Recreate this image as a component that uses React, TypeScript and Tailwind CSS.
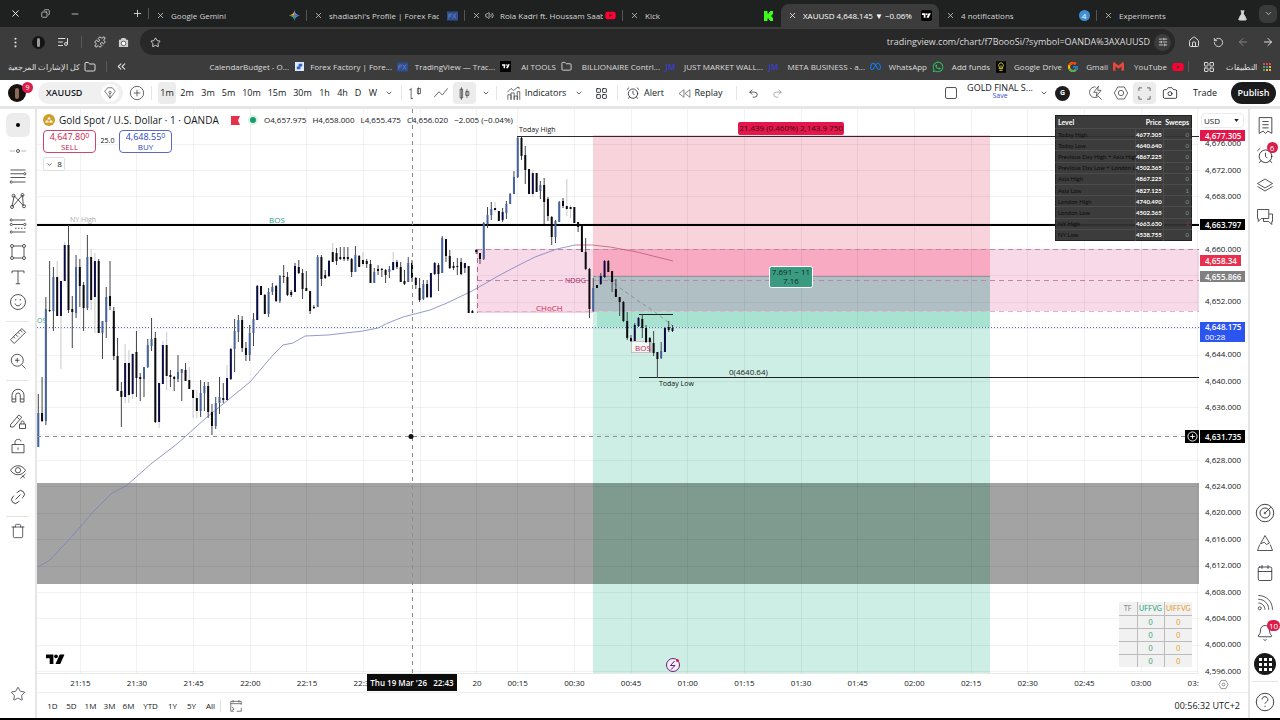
import type { ReactNode } from "react";
import {
  AlarmClock,
  Bell,
  Calendar,
  Camera,
  ChevronDown,
  ChevronsLeft,
  Copy,
  EllipsisVertical,
  FlaskConical,
  Folder,
  House,
  Layers,
  LayoutGrid,
  Link2,
  ListMusic,
  Minus,
  Plus,
  Puzzle,
  Redo2,
  RotateCcw,
  Rss,
  SlidersHorizontal,
  Star,
  Trash,
  Undo2,
  Volume2,
  X,
  ArrowLeft,
  ArrowRight,
} from "lucide-react";
import { FaWhatsapp, FaYoutube, FaMeta } from "react-icons/fa6";
import { FcGoogle } from "react-icons/fc";
import { SiGmail } from "react-icons/si";

type Kind = "k" | "n" | "b";
// high, low, body top, body bottom, colour, pale wick
type Candle = [number, number, number, number, Kind, 1?];

const candles: Candle[] = [
  [394, 447, 413, 447, "b"], [377, 422, 413, 421, "k"], [297, 425, 309, 421, "b"], [261, 312, 310, 311, "k"],
  [267, 331, 277, 311, "b"], [261, 316, 277, 316, "k", 1], [281, 369, 281, 316, "n", 1], [242, 281, 245, 281, "n", 1],
  [225, 313, 245, 310, "k"], [296, 348, 309, 312, "k"], [255, 318, 267, 313, "b"], [259, 307, 267, 286, "k"],
  [282, 331, 285, 308, "k"], [235, 310, 257, 308, "b"], [249, 310, 257, 300, "k", 1], [253, 333, 261, 297, "n", 1],
  [259, 333, 261, 333, "k"], [321, 359, 321, 333, "b"], [287, 338, 297, 322, "b"], [261, 310, 296, 306, "k"],
  [307, 360, 311, 356, "k"], [338, 391, 356, 391, "k"], [382, 427, 391, 397, "k"], [344, 403, 363, 397, "n", 1],
  [350, 403, 363, 395, "k", 1], [353, 399, 354, 394, "n", 1], [331, 397, 352, 378, "k"], [373, 401, 377, 379, "k"],
  [367, 397, 367, 379, "b"], [339, 368, 345, 367, "b"], [318, 351, 339, 346, "b"], [332, 423, 338, 422, "k"],
  [383, 428, 383, 422, "n", 1], [341, 384, 345, 384, "n", 1], [332, 390, 345, 376, "k", 1], [370, 387, 375, 377, "k"],
  [376, 391, 377, 379, "k"], [355, 382, 372, 379, "b"], [369, 401, 369, 373, "b"], [363, 381, 370, 381, "k"],
  [367, 389, 380, 389, "k", 1], [389, 418, 390, 398, "k", 1], [390, 418, 398, 411, "k", 1], [380, 417, 393, 411, "b"],
  [382, 411, 386, 393, "b"], [382, 418, 386, 412, "k"], [404, 435, 412, 426, "k"], [397, 429, 403, 426, "b"],
  [377, 414, 397, 403, "b"], [383, 403, 398, 400, "k"], [365, 400, 378, 400, "n", 1], [348, 380, 349, 379, "n"],
  [319, 372, 331, 349, "b"], [315, 342, 320, 332, "b"], [316, 352, 320, 348, "k"], [342, 361, 348, 355, "k"],
  [325, 361, 333, 355, "b"], [313, 346, 319, 333, "b"], [285, 320, 286, 320, "n"], [286, 295, 286, 295, "k"],
  [294, 314, 295, 314, "k"], [288, 317, 292, 314, "b"], [283, 295, 287, 292, "b"], [285, 302, 286, 301, "k"],
  [275, 303, 276, 301, "b"], [265, 283, 276, 277, "k"], [272, 296, 277, 295, "k"], [290, 297, 292, 295, "k"],
  [263, 292, 266, 292, "n"], [260, 274, 267, 273, "k"], [269, 299, 273, 289, "k"], [271, 291, 288, 291, "k"],
  [291, 314, 291, 311, "k"], [305, 309, 307, 308, "k"], [255, 307, 257, 307, "b"], [255, 286, 257, 279, "k"],
  [270, 279, 275, 278, "k"], [260, 277, 261, 276, "n"], [243, 262, 252, 262, "k", 1], [248, 265, 253, 261, "k"],
  [247, 260, 257, 259, "k"], [247, 261, 257, 259, "k"], [247, 261, 257, 259, "k"], [258, 277, 259, 272, "k"],
  [246, 272, 255, 272, "b"], [255, 267, 256, 267, "k"], [252, 266, 260, 264, "k", 1], [259, 268, 261, 264, "k"],
  [260, 283, 264, 283, "k"], [268, 283, 272, 283, "b"], [265, 275, 269, 271, "k"], [268, 277, 269, 270, "k"],
  [269, 283, 270, 275, "k"], [266, 278, 269, 272, "b"], [252, 271, 262, 270, "n", 1], [260, 269, 262, 267, "k"],
  [262, 282, 267, 282, "k"], [270, 285, 281, 284, "k"], [257, 282, 263, 282, "b"], [260, 282, 263, 278, "k"],
  [277, 289, 278, 285, "k"], [278, 302, 288, 300, "k"], [280, 300, 284, 299, "b"], [280, 298, 284, 297, "k"],
  [273, 298, 273, 297, "n"], [262, 275, 263, 274, "n"], [263, 291, 265, 274, "k"], [236, 273, 238, 273, "b"],
  [239, 262, 239, 256, "k"], [250, 269, 256, 268, "k"], [262, 270, 266, 268, "k"], [258, 275, 266, 267, "k"],
  [258, 275, 262, 274, "k"], [263, 273, 263, 268, "n"], [266, 313, 266, 313, "k"], [310, 313, 311, 313, "k"],
  [249, 254, 250, 252, "k"], [253, 264, 253, 259, "k"], [222, 260, 223, 259, "b"], [207, 228, 215, 224, "b"],
  [202, 220, 209, 215, "b"], [202, 212, 208, 210, "k", 1], [211, 221, 211, 221, "k"], [208, 222, 212, 220, "n"],
  [201, 219, 204, 213, "b"], [193, 204, 194, 204, "b"], [171, 194, 177, 194, "b"], [137, 178, 138, 177, "b"],
  [137, 160, 138, 156, "k"], [146, 184, 155, 170, "k"], [169, 194, 169, 194, "k"], [170, 197, 173, 194, "n", 1],
  [173, 192, 173, 192, "k"], [181, 199, 185, 191, "b"], [178, 224, 185, 202, "k"], [197, 221, 199, 216, "k"],
  [216, 245, 217, 237, "k"], [220, 243, 221, 237, "b"], [201, 222, 202, 222, "b"], [198, 208, 201, 206, "k"],
  [179, 216, 206, 209, "k", 1], [205, 218, 207, 209, "k", 1], [207, 223, 207, 223, "k"], [222, 232, 222, 227, "k"],
  [226, 252, 226, 252, "k"], [238, 270, 252, 269, "k"], [268, 318, 269, 309, "k"], [278, 312, 288, 311, "b"],
  [274, 288, 285, 288, "k", 1], [273, 285, 276, 284, "n"], [260, 278, 261, 277, "n"], [260, 272, 261, 272, "k"],
  [271, 292, 271, 282, "k"], [279, 297, 289, 297, "k"], [297, 316, 297, 302, "k"], [301, 322, 302, 321, "k"],
  [312, 340, 321, 338, "k"], [335, 342, 338, 341, "k"], [323, 341, 325, 341, "n"], [317, 327, 318, 326, "n"],
  [314, 338, 319, 328, "k"], [325, 343, 328, 342, "k"], [337, 352, 338, 342, "k"], [331, 356, 343, 353, "k"],
  [352, 378, 352, 359, "k"], [342, 359, 351, 358, "b"], [327, 352, 328, 352, "n"], [321, 332, 327, 330, "k"],
  [325, 332, 328, 331, "n"],
];

const bodyColor = { k: "#0a0a0f", n: "#0b0b45", b: "#45639f" };

const gridX = [80, 136, 193, 250, 306, 363, 420, 476, 517, 574, 631, 687, 744, 801, 857, 914, 971, 1027, 1084, 1141, 1197];
const gridY = Array.from({ length: 21 }, (_, i) => Math.round(143.5 + i * 26.38));

const hiddenPrices = [4664, 4656, 4648, 4632];
const prices = Array.from({ length: 21 }, (_, i) => 4676 - i * 4);

const levels: [string, string, string][] = [
  ["Today High", "4677.305", "0"],
  ["Today Low", "4640.640", "0"],
  ["Previous Day High + Asia High", "4867.225", "0"],
  ["Previous Day Low + London Low", "4502.365", "0"],
  ["Asia High", "4867.225", "0"],
  ["Asia Low", "4827.125", "1"],
  ["London High", "4740.490", "0"],
  ["London Low", "4502.365", "0"],
  ["NY High", "4663.630", "1"],
  ["NY Low", "4538.755", "0"],
];

function TvMark({ className }: { className?: string }) {
  return (
    <svg viewBox="0 0 36 20" className={className} fill="currentColor" aria-hidden="true">
      <path d="M0 1h14v18H7V8H0z" />
      <circle cx="19" cy="4.500" r="3.500" />
      <path d="M26 1h9l-8 18h-9z" />
    </svg>
  );
}

function Cell({ w, label, on, children }: { w: string; label?: string; on?: boolean; children: ReactNode }) {
  return (
    <button
      aria-label={label}
      className={`${w} ${on ? "bg-[#ececec]" : ""} h-[22px] shrink-0 rounded-sm flex items-center justify-center whitespace-nowrap`}
    >
      {children}
    </button>
  );
}

function Rule({ className }: { className: string }) {
  return <span className={`shrink-0 ${className}`} />;
}

/* Thin-line drawing used by the toolbar and both side rails */
function Glyph({ children, size = "size-[20px]" }: { children: ReactNode; size?: string }) {
  return (
    <svg viewBox="0 0 24 24" className={size} fill="none" stroke="#333" strokeWidth="1.100" aria-hidden="true">
      {children}
    </svg>
  );
}

function Tab({ title, icon, active, audio, divider }: { title: string; icon: ReactNode; active?: boolean; audio?: boolean; divider?: boolean }) {
  return (
    <div
      className={`relative flex-1 min-w-0 h-[23px] mt-1 px-1.5 flex items-center ${
        active ? "bg-[#3c3c3c] rounded-t-lg text-white" : ""
      }`}
    >
      <button aria-label={`Close ${title}`} className="shrink-0 w-[10px] flex justify-center">
        <X className="size-[9px]" />
      </button>
      {audio && <Volume2 className="size-[9px] ml-1 shrink-0" />}
      <a href="#" className="ml-1.5 w-[110px] overflow-hidden whitespace-nowrap">
        {title}
      </a>
      <span className="ml-auto shrink-0 w-[14px] flex justify-center">{icon}</span>
      {divider && <span className="absolute right-0 top-1.5 w-px h-[11px] bg-[#555]" />}
    </div>
  );
}

function TabStrip() {
  return (
    <div className="h-[27px] bg-[#1f2020] flex items-center text-[8px] text-[#d5d5d5]">
      <div className="w-[149px] shrink-0 flex items-center pl-2">
        <button aria-label="Close window" className="w-[14px] flex justify-center"><X className="size-[11px] text-white" /></button>
        <button aria-label="Restore" className="w-[14px] ml-4 flex justify-center"><Copy className="size-[9px] -scale-x-100" /></button>
        <button aria-label="Minimize" className="w-[14px] ml-4 flex justify-center"><Minus className="size-[10px]" /></button>
        <button aria-label="New tab" className="w-[14px] ml-auto mr-1 flex justify-center"><Plus className="size-[11px]" /></button>
        <span className="w-px h-[11px] bg-[#555]" />
      </div>
      <Tab
        title="Google Gemini"
        divider
        icon={
          <svg viewBox="0 0 20 20" className="size-[11px]">
            <path d="M10 0c1 6 4 9 10 10H10z" fill="#4a8df6" />
            <path d="M20 10c-6 1-9 4-10 10V10z" fill="#5b7ff0" />
            <path d="M10 20C9 14 6 11 0 10h10z" fill="#36b25f" />
            <path d="M0 10c6-1 9-4 10-10v10z" fill="#f0a94a" />
          </svg>
        }
      />
      <Tab title="shadiashi's Profile | Forex Facto" divider icon={<ForexIcon />} />
      <Tab title="Rola Kadri ft. Houssam Saab" audio divider icon={<FaYoutube className="size-[11px] text-[#ff0033]" />} />
      <Tab
        title="Kick"
        icon={
          <svg viewBox="0 0 18 20" className="w-[9px] h-[10px]" fill="#3dfb1b">
            <path d="M0 0h7v5h3V2h2V0h6v7h-2v2h-2v2h2v2h2v7h-6v-2h-2v-3H7v5H0z" />
          </svg>
        }
      />
      <Tab
        title="XAUUSD 4,648.145 ▼ −0.06%"
        active
        icon={<span className="size-[11px] bg-black rounded-xs flex items-center justify-center"><TvMark className="w-[9px] text-white" /></span>}
      />
      <Tab
        title="4 notifications"
        divider
        icon={<span className="size-[11px] rounded-full bg-[#3f8fd6] text-white text-[8px] flex items-center justify-center">4</span>}
      />
      <Tab title="Experiments" icon={<FlaskConical className="size-[11px] fill-current" />} />
      <div className="w-[25px] shrink-0 flex items-center">
        <button aria-label="Search tabs" className="ml-1 size-[18px] rounded-md bg-[#3a3a3a] flex items-center justify-center">
          <ChevronDown className="size-[9px]" />
        </button>
      </div>
    </div>
  );
}

function ForexIcon() {
  return (
    <svg viewBox="0 0 12 10" className="w-[11px] h-[10px]">
      <rect width="12" height="10" fill="#2f4c8c" />
      <path d="M2 8V3h4M2 5h3M6 8l4-6M7 3l3 5" stroke="#5d7cc0" fill="none" />
    </svg>
  );
}

function AddressBar() {
  return (
    <div className="h-[30px] bg-[#3c3c3c] flex items-center text-[#dcdcdc]">
      <div className="w-[140px] shrink-0 flex items-center pl-2">
        <button aria-label="Menu" className="w-[14px] flex justify-center"><EllipsisVertical className="size-[13px]" /></button>
        <span className="ml-2.5 size-[13px] rounded-full bg-[#151515] flex items-center justify-center">
          <span className="w-[3px] h-[9px] rounded-full bg-[#999]" />
        </span>
        <button aria-label="Media" className="ml-3 w-[12px]"><ListMusic className="size-[12px]" /></button>
        <span className="ml-3 w-px h-[12px] bg-[#5a5a5a]" />
        <button aria-label="Extensions" className="ml-3 w-[12px]"><Puzzle className="size-[12px]" /></button>
        <button aria-label="Capture" className="ml-3 w-[12px]">
          <svg viewBox="0 0 12 12" className="size-[11px]">
            <path d="M1 3h2l1-2h4l1 2h2v8H1z" fill="#cfcfcf" />
            <circle cx="6" cy="7" r="2.500" fill="#fff" stroke="#555" />
          </svg>
        </button>
      </div>
      <div className="flex-1 h-[26px] rounded-full bg-[#282828] flex items-center pl-2.5 pr-1">
        <button aria-label="Bookmark"><Star className="size-[11px]" /></button>
        <input
          aria-label="Address"
          readOnly
          value="tradingview.com/chart/f7BoooSi/?symbol=OANDA%3AXAUUSD"
          className="flex-1 min-w-0 bg-transparent text-right text-[9px] outline-none mr-1"
        />
        <button aria-label="Site settings" className="size-[17px] rounded-full bg-[#3c3c3c] flex items-center justify-center">
          <SlidersHorizontal className="size-[10px]" />
        </button>
      </div>
      <div className="w-[105px] shrink-0 flex items-center justify-around pl-1.5">
        <button aria-label="Home"><House className="size-[12px]" /></button>
        <button aria-label="Reload"><RotateCcw className="size-[11px]" /></button>
        <button aria-label="Forward" disabled><ArrowLeft className="size-[12px] text-[#858585]" /></button>
        <button aria-label="Back"><ArrowRight className="size-[12px]" /></button>
      </div>
    </div>
  );
}

const jm = <span className="text-[8px] font-semibold text-[#3b3fd8]">JM</span>;

const bookmarks: { text: string; w: string; icon: ReactNode }[] = [
  {
    text: "CalendarBudget - O...",
    w: "w-[96px]",
    icon: (
      <svg viewBox="0 0 10 10" className="size-[9px]">
        <rect width="10" height="10" fill="#dfe8fb" />
        <path d="M2 8V5h2V2h4v3H6v3z" fill="#2f62c9" />
      </svg>
    ),
  },
  { text: "Forex Factory | Fore...", w: "w-[103px]", icon: <ForexIcon /> },
  {
    text: "TradingView — Trac...",
    w: "w-[103px]",
    icon: <span className="size-[11px] bg-black flex items-center justify-center"><TvMark className="w-[8px] text-white" /></span>,
  },
  { text: "AI TOOLS", w: "w-[61px]", icon: <Folder className="size-[11px]" /> },
  { text: "BILLIONAIRE Contrl...", w: "w-[104px]", icon: jm },
  { text: "JUST MARKET WALL...", w: "w-[103px]", icon: jm },
  { text: "META BUSINESS - a...", w: "w-[102px]", icon: <FaMeta className="size-[11px] text-[#1478e8]" /> },
  { text: "WhatsApp", w: "w-[62px]", icon: <FaWhatsapp className="size-[12px] text-[#2bc464]" /> },
  {
    text: "Add funds",
    w: "w-[63px]",
    icon: (
      <svg viewBox="0 0 12 14" className="w-[10px] h-[12px]">
        <rect width="12" height="14" fill="#080808" />
        <path d="M6 2a3 3 0 0 1 2 5v2H4V7a3 3 0 0 1 2-5zM4 11h4M6 5v4" fill="none" stroke="#f0dc30" />
      </svg>
    ),
  },
  { text: "Google Drive", w: "w-[72px]", icon: <FcGoogle className="size-[12px]" /> },
  { text: "Gmail", w: "w-[46px]", icon: <SiGmail className="size-[11px] text-[#e6483c]" /> },
  { text: "YouTube", w: "w-[59px]", icon: <FaYoutube className="size-[12px] text-[#ff0033]" /> },
];

function BookmarkBar() {
  return (
    <div className="h-[23px] bg-[#3c3c3c] flex items-center pb-1 text-[8px] text-[#dcdcdc] whitespace-nowrap">
      <a href="#" dir="rtl" className="w-[82px] shrink-0 text-right pr-0.5">كل الإشارات المرجعية</a>
      <Folder className="ml-0.5 size-[12px] shrink-0" />
      <Rule className="ml-2.5 w-px h-[11px] bg-[#5a5a5a]" />
      <button aria-label="More bookmarks" className="ml-2"><ChevronsLeft className="size-[13px]" /></button>
      <div className="ml-auto flex items-center">
        {bookmarks.map((b) => (
          <a key={b.text} href="#" className={`${b.w} shrink-0 flex items-center justify-end`}>
            <span className="mr-1">{b.text}</span>
            <span className="w-[13px] shrink-0 flex justify-center">{b.icon}</span>
          </a>
        ))}
      </div>
      <Rule className="ml-1 w-px h-[11px] bg-[#5a5a5a]" />
      <LayoutGrid className="ml-3.5 size-[12px] shrink-0" />
      <a href="#" className="w-[56px] shrink-0 flex items-center justify-end">
        <span className="mr-1.5">التطبيقات</span>
        <span className="grid grid-cols-3 gap-px">
          {["#e0483d", "#e0483d", "#e0483d", "#3fa85b", "#4b84e6", "#eab840", "#3fa85b", "#eab840", "#eab840"].map((c, i) => (
            <i key={i} className="size-[2px]" style={{ background: c }} />
          ))}
        </span>
      </a>
      <Rule className="w-[9px]" />
    </div>
  );
}

function ChartToolbar() {
  return (
    <div className="h-[26px] bg-white flex items-center text-[9px] text-[#131722] whitespace-nowrap overflow-hidden">
      <button aria-label="Account" className="relative ml-2 size-[18px] shrink-0 rounded-full bg-[#15110f] flex items-center justify-center">
        <span className="w-[4px] h-[11px] rounded-full bg-[#8d6a58]" />
        <span className="absolute -top-[2px] left-[14px] size-[11px] rounded-full bg-[#d91e4a] text-white text-[7px] leading-none flex items-center justify-center">
          9
        </span>
      </button>
      <button className="ml-3 w-[85px] h-[22px] shrink-0 rounded-full bg-[#f0f0f0] pl-2 pr-1 flex items-center justify-between font-semibold">
        XAUUSD
        <span className="size-[18px] rounded-full bg-white flex items-center justify-center">
          <Glyph size="size-[14px]">
            <path d="M12 21 3 9l5-6h8l5 6zM12 21v-8" />
            <circle cx="12" cy="11" r="2" />
          </Glyph>
        </span>
      </button>
      <Cell w="w-[28px]" label="Compare">
        <Glyph size="size-[16px]">
          <circle cx="12" cy="12" r="10" />
          <path d="M12 7v10M7 12h10" />
        </Glyph>
      </Cell>
      <Rule className="w-px h-[14px] bg-[#e5e5e5] mr-1.5" />
      <Cell w="w-[18px]" on>1m</Cell>
      <Cell w="w-[22px]">2m</Cell>
      <Cell w="w-[20px]">3m</Cell>
      <Cell w="w-[21px]">5m</Cell>
      <Cell w="w-[25px]">10m</Cell>
      <Cell w="w-[26px]">15m</Cell>
      <Cell w="w-[25px]">30m</Cell>
      <Cell w="w-[19px]">1h</Cell>
      <Cell w="w-[17px]">4h</Cell>
      <Cell w="w-[14px]">D</Cell>
      <Cell w="w-[16px]">W</Cell>
      <Cell w="w-[16px]" label="Intervals"><ChevronDown className="size-[8px]" /></Cell>
      <Rule className="w-px h-[14px] bg-[#e5e5e5] ml-1" />
      <Cell w="w-[26px]" label="Bars">
        <Glyph size="size-[15px]"><path d="M5 3v18M2 6h3M5 20h3M17 2v12M15 4h5v8h-5z" /></Glyph>
      </Cell>
      <Cell w="w-[25px]" label="Line"><Glyph size="size-[16px]"><path d="m2 18 7-8 5 5 8-10" /></Glyph></Cell>
      <Cell w="w-[23px]" label="Candles" on>
        <Glyph size="size-[15px]"><path d="M7 2v20M5 5h4v14H5zM16 5v14M14 9h5v6h-5z" /></Glyph>
      </Cell>
      <Cell w="w-[20px]" label="Chart types"><ChevronDown className="size-[8px]" /></Cell>
      <Rule className="w-px h-[14px] bg-[#e5e5e5] mr-2" />
      <Cell w="w-[62px]">
        <Glyph size="size-[15px]">
          <path d="m2 10 6-6 4 3 7-5M18 2h3v3M3 22v-8h5v8M8 22V11h5v11M13 22v-6h5v6M18 22V9h4v13" />
        </Glyph>
        <span className="ml-1">Indicators</span>
      </Cell>
      <Cell w="w-[24px]" label="Favourite indicators"><ChevronDown className="size-[8px]" /></Cell>
      <Cell w="w-[20px]" label="Templates"><LayoutGrid strokeWidth={1.5} className="size-[13px]" /></Cell>
      <Rule className="w-px h-[14px] bg-[#e5e5e5] ml-1.5 mr-1" />
      <Cell w="w-[46px]"><AlarmClock strokeWidth={1.3} className="size-[14px] mr-1" />Alert</Cell>
      <Cell w="w-[64px]">
        <Glyph size="size-[13px]"><path d="M11 5v14l-9-7zM22 5v14l-9-7z" /></Glyph>
        <span className="ml-1">Replay</span>
      </Cell>
      <Rule className="w-px h-[14px] bg-[#e5e5e5] mx-1" />
      <Cell w="w-[24px]" label="Undo"><Undo2 strokeWidth={1.5} className="size-[11px]" /></Cell>
      <Cell w="w-[24px]" label="Redo"><Redo2 strokeWidth={1.5} className="size-[11px] text-[#8a8a8a]" /></Cell>
      <div className="ml-auto flex items-center">
        <Cell w="w-[16px]" label="Layout"><span className="size-[12px] border border-[#555] rounded-xs" /></Cell>
        <button className="w-[70px] h-[24px] ml-1.5 flex flex-col items-center pt-0.5 leading-[9px]">
          <span>GOLD FINAL S...</span>
          <span className="text-[7px] leading-[8px] text-[#3b49c9]">Save</span>
        </button>
        <Cell w="w-[18px]" label="Layouts"><ChevronDown className="size-[8px]" /></Cell>
        <span className="size-[15px] ml-0.5 rounded-full bg-[#1d1d1d] text-white text-[7px] font-bold flex items-center justify-center">G</span>
        <Rule className="w-3" />
        <Cell w="w-[26px]" label="Quick search">
          <Glyph size="size-[16px]"><path d="M17 17a8 8 0 1 1-4-14M16 16l6 6M17 2l-7 9h5l-1 6 7-9h-5z" /></Glyph>
        </Cell>
        <Cell w="w-[25px]" label="Settings">
          <Glyph size="size-[16px]"><path d="M7 3h10l5 9-5 9H7l-5-9z" /><circle cx="12" cy="12" r="4" /></Glyph>
        </Cell>
        <Cell w="w-[23px]" label="Fullscreen" on>
          <Glyph size="size-[15px]"><path d="M3 8V3h5M16 3h5v5M21 16v5h-5M8 21H3v-5" /></Glyph>
        </Cell>
        <Cell w="w-[27px]" label="Snapshot"><Camera strokeWidth={1.2} className="size-[16px]" /></Cell>
        <button className="w-[40px] ml-0.5 h-[22px] rounded-full">Trade</button>
        <button className="w-[45px] h-[22px] ml-1.5 mr-1 rounded-full bg-[#1b1b1b] text-white font-semibold">Publish</button>
      </div>
    </div>
  );
}

const leftTools: { name: string; h: string; glyph: ReactNode; ruled?: boolean }[] = [
  { name: "Cross line", h: "h-[25px]", glyph: <><path d="M1 12h7M16 12h7" stroke="#aaa" /><circle cx="12" cy="12" r="2" /></> },
  { name: "Fib", h: "h-[25px]", glyph: <><path d="M2 4h20M2 9h17M2 14h20M5 20h17" /><circle cx="21" cy="9" r="1.500" /><circle cx="3" cy="20" r="1.500" /></> },
  { name: "Patterns", h: "h-[25px]", glyph: <><path d="M4 19 7 5l12 13L18 4 5 19" /><circle cx="4" cy="20" r="2" /><circle cx="6" cy="5" r="2" /><circle cx="18" cy="4" r="2" /><circle cx="20" cy="19" r="2" /></> },
  { name: "Forecast", h: "h-[25px]", glyph: <><path d="M5 4h17M5 10h14M5 20h17" /><path d="M8 15h14" strokeDasharray="2 2" /><circle cx="3" cy="4" r="1.500" /><circle cx="21" cy="10" r="1.500" /><circle cx="3" cy="10" r="1.500" /><circle cx="3" cy="20" r="1.500" /></> },
  { name: "Shapes", h: "h-[26px]", glyph: <><path d="M6 4h12M6 20h12M4 6v12M20 6v12" /><circle cx="4" cy="4" r="2" /><circle cx="20" cy="4" r="2" /><circle cx="4" cy="20" r="2" /><circle cx="20" cy="20" r="2" /></> },
  { name: "Text", h: "h-[25px]", glyph: <path d="M4 7V4h16v3M12 4v17M9 21h6" /> },
  { name: "Icons", h: "h-[25px]", glyph: <><circle cx="12" cy="12" r="10" /><path d="M8 14c1 4 7 4 8 0M9 8v2M15 8v2" /></> },
  { name: "Measure", h: "h-[25px]", glyph: <path d="M2 17 17 2l5 5L7 22zM6 13l2 2M9 10l3 3M12 7l2 2M15 4l3 3" />, ruled: true },
  { name: "Zoom", h: "h-[25px]", glyph: <><circle cx="11" cy="11" r="8" /><path d="m17 17 5 5M11 8v6M8 11h6" /></> },
  { name: "Magnet", h: "h-[26px]", glyph: <path d="M4 20V11a8 8 0 0 1 16 0v9h-5v-9a3 3 0 0 0-6 0v9zM4 16h5M15 16h5" />, ruled: true },
  { name: "Draw mode", h: "h-[25px]", glyph: <><path d="M2 17 13 4l4 3L6 20H2zM11 7l3 3" /><path d="M14 16h8v6h-8zM16 16v-2c0-3 4-3 4 0v2" /></> },
  { name: "Lock", h: "h-[25px]", glyph: <><path d="M4 10h16v11H4zM8 10V7c0-5 8-5 8-1M12 14v3" /></> },
  { name: "Hide", h: "h-[25px]", glyph: <><path d="M2 11c5-8 15-8 20 0-5 8-15 8-20 0z" /><circle cx="12" cy="11" r="3.500" /><path d="m15 22 7-6M17 18l4 3" /></> },
];

function LeftRail() {
  return (
    <nav className="w-[35px] shrink-0 bg-white flex flex-col items-center pt-1">
      <button aria-label="Cursor" className="size-[24px] shrink-0 rounded-md bg-[#ececec] flex items-center justify-center">
        <span className="size-[4px] rounded-full bg-black" />
      </button>
      {leftTools.map((t) => (
        <div key={t.name} className="shrink-0 flex flex-col items-center">
          {t.ruled && <span className="w-[23px] h-px mt-2 bg-[#e6e6e6]" />}
          <button aria-label={t.name} className={`${t.h} w-[24px] flex items-end justify-center pb-0.5`}>
            <Glyph size="size-[18px]">{t.glyph}</Glyph>
          </button>
        </div>
      ))}
      <button aria-label="Sync" className="h-[26px] flex items-end pb-0.5"><Link2 strokeWidth={1} className="size-[18px] -rotate-45" /></button>
      <span className="w-[23px] h-px mt-2 bg-[#e2e2e2]" />
      <button aria-label="Remove" className="h-[24px] flex items-end pb-0.5"><Trash strokeWidth={1} className="size-[16px]" /></button>
      <button aria-label="Favourites" className="mt-auto mb-4"><Star strokeWidth={1} className="size-[16px]" /></button>
    </nav>
  );
}

function Badge({ children }: { children: ReactNode }) {
  return (
    <span className="absolute -top-[3px] left-[11px] min-w-[11px] h-[11px] px-0.5 rounded-full bg-[#d91e4a] text-white text-[8px] leading-none flex items-center justify-center">
      {children}
    </span>
  );
}

function RightRail() {
  return (
    <nav className="w-[30px] shrink-0 bg-white flex flex-col items-center pt-1.5">
      <button aria-label="Watchlist" className="h-[20px]">
        <Glyph size="size-[19px]"><path d="M4 2h16v20l-5-3-3 3-3-3-5 3zM8 7h8M8 11h8M8 15h8" /></Glyph>
      </button>
      <button aria-label="Alerts" className="relative mt-2.5 h-[20px]">
        <AlarmClock strokeWidth={1} className="size-[19px]" />
        <Badge>6</Badge>
      </button>
      <button aria-label="Object tree" className="mt-2.5 h-[20px]">
        <Glyph size="size-[18px]"><path d="m12 4 10 6-10 6-10-6zM2 14l10 6 10-6" /></Glyph>
      </button>
      <button aria-label="Chats" className="mt-3 h-[20px]">
        <Glyph size="size-[18px]"><path d="M2 2h15v12H7l-4 4V14H2zM17 8h5v10h-1v4l-4-4h-7v-4" /></Glyph>
      </button>
      <div className="mt-auto flex flex-col items-center gap-2.5">
        <button aria-label="Screener" className="h-[20px]">
          <Glyph size="size-[20px]"><circle cx="12" cy="12" r="10.500" /><circle cx="12" cy="12" r="6" /><circle cx="12" cy="12" r="1" /><path d="m13 11 6-6" /></Glyph>
        </button>
        <button aria-label="Pine" className="h-[20px]">
          <Glyph size="size-[18px]"><path d="m12 2 6 10-4 2-3-3-5 2zM5 14l-3 8h20l-3-8" /></Glyph>
        </button>
        <button aria-label="Calendar" className="h-[20px]"><Calendar strokeWidth={1} className="size-[18px]" /></button>
        <button aria-label="News" className="h-[20px]">
          <Glyph size="size-[18px]"><path d="M3 2c11 0 19 8 19 19M3 7c8 0 14 6 14 14M3 12c5 0 9 4 9 9" /><circle cx="5" cy="19" r="2" /></Glyph>
        </button>
        <button aria-label="Notifications" className="relative h-[20px]">
          <Bell strokeWidth={1} className="size-[18px]" />
          <Badge>10</Badge>
        </button>
        <button aria-label="Products" className="size-[22px] rounded-full bg-[#191919] flex items-center justify-center">
          <span className="grid grid-cols-3 gap-0.5">
            {Array.from({ length: 9 }, (_, i) => <i key={i} className="size-[3px] bg-white" />)}
          </span>
        </button>
      </div>
      <span className="w-[26px] h-px mt-1.5 bg-[#e5e5e5]" />
      <button aria-label="Help" className="mt-2.5 mb-1.5">
        <Glyph size="size-[20px]"><circle cx="12" cy="12" r="10.500" /><path d="M8.500 9c0-5 7-4 7 0 0 3-3.500 3-3.500 5M12 16.500v1.500" /></Glyph>
      </button>
    </nav>
  );
}

function Plot() {
  return (
    <svg viewBox="37 109 1162 564" preserveAspectRatio="xMinYMin slice" className="block size-full text-[8px]" role="img" aria-label="XAUUSD one minute chart">
      {/* session zones */}
      <rect x="477" y="249" width="722" height="62" fill="#f8d9e8" />
      <rect x="477" y="311" width="116" height="2" fill="#f6cfdf" />
      <rect x="593" y="135" width="397" height="114" fill="#f8d3db" />
      <rect x="593" y="249" width="397" height="27" fill="#f7aac2" />
      <rect x="593" y="276" width="397" height="35" fill="#b0bfc3" />
      <rect x="593" y="311" width="397" height="362" fill="#cdeee4" />
      <rect x="597" y="311" width="393" height="16" fill="#a8e3d1" />
      <rect x="37" y="483" width="1162" height="101" fill="#a3a3a3" />
      <rect x="593" y="483" width="397" height="101" fill="#7f9a8f" />
      <g stroke="#000" strokeOpacity=".05" shapeRendering="crispEdges">
        {gridX.map((x) => <path key={x} d={`M${x} 109V673`} />)}
        {gridY.map((y) => <path key={y} d={`M37 ${y}H1199`} />)}
      </g>

      {/* level lines */}
      <g shapeRendering="crispEdges">
        <path d="M37 225H1199" stroke="#000" strokeWidth="2" />
        <path d="M517 136.500H1199" stroke="#2b2b35" />
        <path d="M477 249.500H1199M477 280.500H1199" stroke="#c483a3" strokeDasharray="5 4" />
        <path d="M477 311.500H1199" stroke="#e0b3c8" strokeDasharray="5 4" />
        <path d="M477.500 249V313" stroke="#b5688f" strokeDasharray="5 4" />
        <path d="M593 276.500H990" stroke="#8e959b" />
        <path d="M37 327.500H1199" stroke="#5a66b8" strokeDasharray="1 2" />
        <path d="M639 377.500H1199M639 314.500H673" stroke="#222" />
      </g>

      <path
        d="M38 567 50 560 62 547 75 533 92 513 112 493 126 486 152 463 177 444 207 417 228 400 250 382 273 355 283 345 293 343 305 336 328 335 363 331 378 328 388 323 403 317 430 310 447 303 472 291 500 275 517 266 535 257 557 249 575 245"
        fill="none"
        stroke="#7a80bd"
        strokeWidth=".8"
      />
      <path d="M575 245 592 245 610 247 637 252 673 261" fill="none" stroke="#c4587a" strokeWidth=".8" />
      <path d="M603 275 620 288 640 302 655 312 673 326" fill="none" stroke="#7d8a8c" strokeWidth=".8" strokeDasharray="4 3" />

      <rect x="631.500" y="341.500" width="20" height="11" fill="#fff" fillOpacity=".7" stroke="#c99" strokeWidth=".6" />
      {candles.map(([hi, lo, top, bottom, kind, pale], i) => {
        const x = 38.3 + i * 3.775;
        return (
          <g key={i}>
            <rect x={x - 0.5} y={hi} width="1" height={lo - hi} fill={pale ? "#c9c9c9" : "#44444c"} />
            <rect x={x - 1} y={top} width="2" height={bottom - top} fill={bodyColor[kind]} />
          </g>
        );
      })}

      {/* drawing labels */}
      <text x="70" y="222" fill="#a9a9a9" fontSize="7">NY High</text>
      <text x="269" y="223" fill="#2f9a78">BOS</text>
      <text x="37" y="323" fill="#3aa79a" fontSize="7">OS</text>
      <text x="519" y="132" fill="#111" fontSize="7">Today High</text>
      <text x="659" y="386" fill="#111" fontSize="7">Today Low</text>
      <text x="565" y="283" fill="#a8215f" fontSize="7">NDOG</text>
      <text x="536" y="311" fill="#d02452">CHoCH</text>
      <text x="635" y="351" fill="#d02452">BOS</text>
      <text x="729" y="375" fill="#222">0(4640.64)</text>
      <rect x="738" y="122" width="106" height="13" rx="2" fill="#e3174b" />
      <text x="791" y="131" textAnchor="middle" fill="#3f0716">21.439 (0.460%) 2,143.9 750</text>
      <rect x="769.500" y="266.500" width="43" height="21" rx="2" fill="#3a9b80" stroke="#fff" />
      <text x="791" y="275" textAnchor="middle" fill="#0d2f26">7.691 ~ 11</text>
      <text x="791" y="284" textAnchor="middle" fill="#0d2f26">7.16</text>

      {/* crosshair */}
      <g stroke="#8c8c8c" strokeDasharray="4 4" shapeRendering="crispEdges">
        <path d="M37 436.500H1190M412.500 109V673" />
      </g>
      <circle cx="411" cy="436.500" r="2.500" fill="#111" />

      <g fill="none" stroke="#6a1b7c">
        <circle cx="673" cy="665" r="6.500" fill="#f3eef8" />
        <path d="m674.500 661-4 4.500h4.500l-4 4" />
        <circle cx="677.500" cy="660.500" r="1.500" fill="#e0203f" stroke="none" />
      </g>
    </svg>
  );
}

function Legend() {
  return (
    <div className="absolute left-1.5 top-1 text-[#131722] whitespace-nowrap">
      <div className="h-[14px] flex items-center">
        <svg viewBox="0 0 12 12" className="size-[12px]">
          <circle cx="6" cy="6" r="6" fill="#cf9f2b" />
          <path d="M4.500 5.500 5 3.500h2l.5 2zM2.300 8.500l.5-2h2.400l.5 2zM6.300 8.500l.5-2h2.400l.5 2z" fill="#fff" />
        </svg>
        <span className="ml-1 w-[172px] text-[10px]">Gold Spot / U.S. Dollar · 1 · OANDA</span>
        <svg viewBox="0 0 9 9" className="size-[9px]"><path d="M0 0h9L7 4.500 9 9H0z" fill="#e8304a" /></svg>
        <span className="ml-2 size-[10px] rounded-full bg-[#d8f2e6] flex items-center justify-center">
          <span className="size-[6px] rounded-full bg-[#1c9b6c]" />
        </span>
        <span className="ml-1.5 text-[8px] flex gap-1.5">
          <span>O4,657.975</span>
          <span>H4,658.000</span>
          <span>L4,655.475</span>
          <span>C4,656.020</span>
          <span>−2.005 (−0.04%)</span>
        </span>
      </div>
      <div className="mt-[3px] flex items-center">
        <button className="w-[53px] h-[23px] rounded-sm border border-[#d0456a] bg-white text-[#c9204c] flex flex-col items-center justify-center">
          <span className="flex items-start text-[9px] leading-[10px]">4,647.80<span className="text-[7px] leading-[8px]">0</span></span>
          <span className="text-[8px] leading-[9px]">SELL</span>
        </button>
        <span className="w-[23px] text-center text-[7px]">25.0</span>
        <button className="w-[53px] h-[23px] rounded-sm border border-[#5a68c8] bg-white text-[#2d44c4] flex flex-col items-center justify-center">
          <span className="flex items-start text-[9px] leading-[10px]">4,648.55<span className="text-[7px] leading-[8px]">0</span></span>
          <span className="text-[8px] leading-[9px]">BUY</span>
        </button>
      </div>
      <button className="mt-1 w-[22px] h-[14px] rounded-xs border border-[#e0e0e0] bg-white text-[8px] flex items-center justify-center gap-1">
        <ChevronDown className="size-[7px]" />8
      </button>
    </div>
  );
}

function LevelsTable() {
  return (
    <table className="absolute right-[7px] top-1.5 w-[136px] h-[126px] table-fixed border-collapse border border-[#222] bg-[#323232]/95 text-[6px] leading-[7px] text-white whitespace-nowrap [font-family:Lato,'Open_Sans',sans-serif]">
      <thead>
        <tr className="h-[13px] text-[7px]">
          <th className="w-[80px] pl-0.5 text-left">Level</th>
          <th className="w-[28px] pr-0.5 text-right">Price</th>
          <th className="w-[28px] pr-0.5 text-right">Sweeps</th>
        </tr>
      </thead>
      <tbody>
        {levels.map(([name, price, sweeps]) => (
          <tr key={name} className="border-t border-[#4c4c4c]">
            <td className="pl-0.5 text-[#0c0c0c]">{name}</td>
            <td className="pr-0.5 text-right font-bold border-x border-[#4c4c4c]">{price}</td>
            <td className={`pr-0.5 text-right ${name === "NY High" ? "text-[#a33]" : "text-[#7f9a86]"}`}>{sweeps}</td>
          </tr>
        ))}
      </tbody>
    </table>
  );
}

function GapTable() {
  return (
    <table className="absolute right-[7px] bottom-1.5 w-[73px] table-fixed border-collapse bg-[#f1f1f1] text-[7px] leading-[8px] text-center [font-family:Lato,'Open_Sans',sans-serif]">
      <thead>
        <tr className="h-[13px]">
          <th className="w-[18px] font-normal text-[#888]">TF</th>
          <th className="w-[27px] font-normal text-[#23a174] border-x border-[#bbb]">UFFVG</th>
          <th className="w-[28px] font-normal text-[#e39a22]">UIFFVG</th>
        </tr>
      </thead>
      <tbody>
        {[1, 2, 3, 4].map((n) => (
          <tr key={n} className="h-[13px] border-t border-[#bbb]">
            <td />
            <td className="text-[#23a174] border-x border-[#bbb]">0</td>
            <td className="text-[#e39a22]">0</td>
          </tr>
        ))}
      </tbody>
    </table>
  );
}

// the slot at 22:45 is left blank for the crosshair date
const timesBefore = ["21:15", "21:30", "21:45", "22:00", "22:15", "22:30", "", "20"];
const timesAfter = ["00:15", "00:30", "00:45", "01:00", "01:15", "01:30", "01:45", "02:00", "02:15", "02:30", "02:45", "03:00", "03:15"];

function TimeAxis() {
  return (
    <div className="relative h-[19px] shrink-0 border-t border-[#e8e8e8] overflow-hidden">
      <div className="ml-[15px] -mr-[27px] h-full flex items-center text-[8px] text-center">
        {timesBefore.map((t) => <span key={t} className="flex-1">{t}</span>)}
        <span className="-ml-4" />
        {timesAfter.map((t) => <span key={t} className="flex-1">{t}</span>)}
      </div>
      <span className="absolute left-[330px] top-0 w-[90px] h-[17px] bg-[#0c0c0c] text-white text-[8px] font-semibold flex items-center justify-center whitespace-pre">
        Thu 19 Mar '26   22:43
      </span>
    </div>
  );
}

function PriceTag({ className, children }: { className: string; children: ReactNode }) {
  return <span className={`absolute left-px pl-[5px] text-[8px] font-semibold text-white flex flex-col ${className}`}>{children}</span>;
}

function PriceAxis() {
  return (
    <div className="relative w-[49px] shrink-0 bg-white flex flex-col text-[8px]">
      <div className="flex-1 min-h-0 -mb-[11px] pt-[21px] flex flex-col">
        {prices.map((p) => (
          <span key={p} className="flex-1 min-h-0 pl-1.5 flex items-center">
            {hiddenPrices.includes(p) ? "" : `${p.toLocaleString("en-US")}.000`}
          </span>
        ))}
      </div>
      <button aria-label="Axis settings" className="h-[19px] pl-[19px] pt-1 flex items-center">
        <Glyph size="size-[11px]"><path d="M7 3h10l5 9-5 9H7l-5-9z" /><circle cx="12" cy="12" r="3" /></Glyph>
      </button>
      <div className="absolute left-0.5 top-1 w-[43px] h-[15px] rounded-sm border border-[#ececec] bg-white flex items-center pr-1">
        <select aria-label="Currency" defaultValue="USD" className="flex-1 min-w-0 appearance-none bg-transparent pl-0.5 text-[8px]">
          <option>USD</option>
        </select>
        <svg viewBox="0 0 6 4" className="w-[5px] h-[3px]"><path d="M0 0h6L3 4z" fill="#222" /></svg>
      </div>
      <PriceTag className="top-[21px] w-[45px] leading-[11px] bg-[#e0174a]">4,677.305</PriceTag>
      <PriceTag className="top-[110px] w-[45px] leading-[11px] bg-black">4,663.797</PriceTag>
      <PriceTag className="top-[146px] w-[41px] leading-[11px] bg-[#e8304f]">4,658.34</PriceTag>
      <PriceTag className="top-[162px] w-[45px] leading-[11px] bg-[#808080]">4,655.866</PriceTag>
      <PriceTag className="top-[213px] w-[45px] leading-[10px] bg-[#2c55f0]">
        <span>4,648.175</span>
        <span className="font-normal">00:28</span>
      </PriceTag>
      <PriceTag className="top-[321px] w-[45px] leading-[13px] bg-black">4,631.735</PriceTag>
      <button aria-label="Add at price" className="absolute -left-[14px] top-[321px] w-[14px] h-[13px] bg-black text-white flex items-center justify-center">
        <svg viewBox="0 0 12 12" className="size-[11px]" fill="none" stroke="#fff"><circle cx="6" cy="6" r="5" /><path d="M6 3.500v5M3.500 6h5" /></svg>
      </button>
    </div>
  );
}

function RangeBar() {
  return (
    <div className="h-[26px] shrink-0 border-t border-[#ededed] bg-white flex items-center pl-1.5 pr-2 text-[8px]">
      {["1D", "5D", "1M", "3M", "6M"].map((r) => <button key={r} className="w-[19px]">{r}</button>)}
      <button className="w-[25px]">YTD</button>
      {["1Y", "5Y", "All"].map((r) => <button key={r} className="w-[19px]">{r}</button>)}
      <Rule className="w-px h-[12px] bg-[#e0e0e0]" />
      <button aria-label="Go to date" className="ml-2">
        <Glyph size="size-[14px]"><path d="M21 10V4H3v17h5M3 8h18M7 2v4M17 2v4M21 15v6h-8M5 14l4 3-4 3" /></Glyph>
      </button>
      <button className="ml-auto text-[9px]">00:56:32 UTC+2</button>
    </div>
  );
}

export default function App() {
  return (
    <div className="h-screen flex flex-col overflow-hidden bg-white border-b-2 border-black text-[#131722] [font-family:'Open_Sans','Noto_Sans',sans-serif]">
      <header className="shrink-0">
        <TabStrip />
        <AddressBar />
        <BookmarkBar />
      </header>
      <ChartToolbar />
      <div className="flex-1 min-h-0 flex border-t-[3px] border-[#e6e6e6]">
        <LeftRail />
        <main className="flex-1 min-w-0 flex flex-col border-l-2 border-[#e6e6e6]">
          <div className="flex-1 min-h-0 flex">
            <div className="flex-1 min-w-0 flex flex-col">
              <div className="relative flex-1 min-h-0 overflow-hidden">
                <Plot />
                <Legend />
                <LevelsTable />
                <GapTable />
                <TvMark className="absolute left-[9px] bottom-2 w-[19px] text-black" />
              </div>
              <TimeAxis />
            </div>
            <PriceAxis />
          </div>
          <RangeBar />
        </main>
        <span className="w-0.5 bg-[#e6e6e6]" />
        <RightRail />
      </div>
    </div>
  );
}
